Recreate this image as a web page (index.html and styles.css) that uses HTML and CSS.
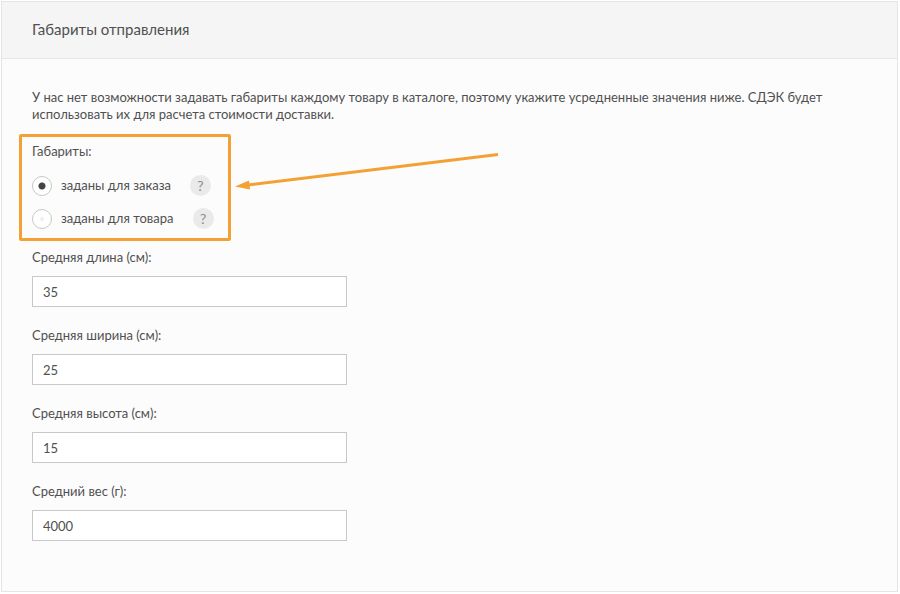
FILE: index.html
```
<!DOCTYPE html>
<html lang="ru">
<head>
  <title>Габариты отправления</title>
  <meta charset="utf-8">
  <link rel="stylesheet" href="styles.css">
</head>
<body>
  <form class="panel">
    <h1 class="panel-title">Габариты отправления</h1>
    <div class="panel-body">
      <p class="note">У нас нет возможности задавать габариты каждому товару в каталоге, поэтому укажите усредненные значения ниже. СДЭК будет использовать их для расчета стоимости доставки.</p>

      <div class="marked">
        <fieldset class="sizes">
          <legend>Габариты:</legend>
          <div class="option">
            <input type="radio" name="sizes" id="sizes-order" checked>
            <label for="sizes-order">заданы для заказа</label>
            <button type="button" class="help">?</button>
          </div>
          <div class="option">
            <input type="radio" name="sizes" id="sizes-item">
            <label for="sizes-item">заданы для товара</label>
            <button type="button" class="help">?</button>
          </div>
        </fieldset>
        <div class="frame"></div>
        <svg class="arrow" width="266" height="40" viewBox="0 0 266 40" aria-hidden="true">
          <path d="M13 35L263 4.5" stroke="#f3a035" stroke-width="3" fill="none"/>
          <path d="M0 36.5L14 30.5L15 39.5Z" fill="#f3a035"/>
        </svg>
      </div>

      <div class="field">
        <label for="length">Средняя длина (см):</label>
        <input type="text" id="length" value="35">
      </div>
      <div class="field">
        <label for="width">Средняя ширина (см):</label>
        <input type="text" id="width" value="25">
      </div>
      <div class="field">
        <label for="height">Средняя высота (см):</label>
        <input type="text" id="height" value="15">
      </div>
      <div class="field">
        <label for="weight">Средний вес (г):</label>
        <input type="text" id="weight" value="4000">
      </div>
    </div>
  </form>
</body>
</html>
```
FILE: styles.css
```
* {
  box-sizing: border-box;
}
body {
  margin: 1px 2px 2px 1px;
  background: #fff;
  color: #505050;
  font: 13px/17px Lato, "Open Sans", sans-serif;
}
.panel {
  background: #fcfcfc;
  border: 1px solid #e5e5e5;
}
.panel-title {
  margin: 0;
  padding: 17px 30px 19px;
  background: #f5f5f5;
  border-bottom: 1px solid #e5e5e5;
  font-size: 15px;
  line-height: 20px;
  font-weight: normal;
}
.panel-body {
  display: flex;
  flex-direction: column;
  align-items: flex-start;
  gap: 20px;
  padding: 30px 30px 50px;
}
.note {
  margin: 0;
  max-width: 815px;
}
.marked {
  position: relative;
}
.sizes {
  margin: 0;
  padding: 0;
  border: none;
}
.sizes legend {
  margin-bottom: 15px;
  padding: 0;
}
.option {
  display: flex;
  align-items: center;
  height: 21px;
}
.option + .option {
  margin-top: 12px;
}
.option input {
  appearance: none;
  width: 20px;
  height: 20px;
  margin: 0 9px 0 0;
  border: 1px solid #c8c8c2;
  border-radius: 50%;
  background: radial-gradient(circle, #eee 1px, #fff 3px);
}
.option input:checked {
  background: radial-gradient(circle, #444 3px, #fff 4px);
}
.help {
  width: 21px;
  height: 21px;
  margin-left: 19px;
  padding: 0;
  border: none;
  border-radius: 50%;
  background: #eaeaea;
  color: #8c8c8c;
  font: inherit;
  font-size: 14px;
  cursor: pointer;
}
.frame {
  position: absolute;
  top: -9px;
  right: -17px;
  bottom: -12px;
  left: -13px;
  border: 3px solid #f3a035;
  border-radius: 2px;
  pointer-events: none;
}
.arrow {
  position: absolute;
  top: 7px;
  left: 203px;
}
.field {
  display: flex;
  flex-direction: column;
  gap: 10px;
  width: 315px;
  max-width: 100%;
}
.field input {
  width: 100%;
  height: 31px;
  padding: 0 10px;
  border: 1px solid #c8c8c8;
  background: #fff;
  color: inherit;
  font: inherit;
}
```
